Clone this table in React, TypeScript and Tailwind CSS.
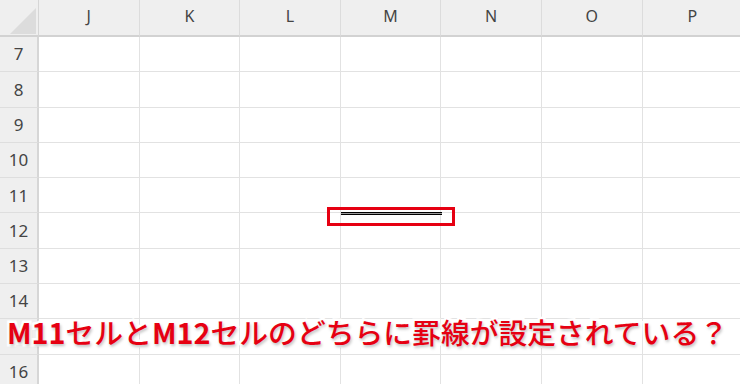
import React from "react"

const cols = ["J", "K", "L", "M", "N", "O", "P"]
const rows = [7, 8, 9, 10, 11, 12, 13, 14, 15, 16]

export default function App() {
  return (
    <div className="relative w-[740px] h-[384px] overflow-hidden bg-white font-['Noto_Sans','Liberation_Sans',sans-serif]">
      {/* sheet grid */}
      <div className="grid grid-cols-[39px_repeat(7,100.6px)] grid-rows-[37px_repeat(10,35.3px)]">
        {/* corner */}
        <div className="relative bg-[#efefef] border-r border-r-[#d6d6d6] border-b-2 border-b-[#d2d2d2]">
          <svg width="39" height="37" className="absolute inset-0">
            <polygon points="10,34 36,34 36,8" fill="#dcdcdc" />
          </svg>
        </div>
        {cols.map((c) => (
          <div
            key={c}
            className="flex items-center justify-center pb-1 bg-[#efefef] border-r border-r-[#dcdcdc] border-b-2 border-b-[#d2d2d2] text-[16px] text-[#444]"
          >
            {c}
          </div>
        ))}

        {rows.map((r) => (
          <React.Fragment key={r}>
            <div className="flex items-center justify-center bg-[#efefef] border-r-2 border-r-[#d6d6d6] border-b border-b-[#dedede] text-[17px] text-[#444]">
              {r}
            </div>
            {cols.map((c) => (
              <div key={c + r} className="border-r border-b border-[#e2e2e2]" />
            ))}
          </React.Fragment>
        ))}
      </div>

      {/* double border under M11 */}
      <div className="absolute left-[341px] top-[212px] w-[101px] h-[3px] border-y border-[#000] bg-[#9a9a9a]" />

      {/* red highlight box */}
      <div className="absolute left-[327px] top-[207px] w-[128px] h-[19px] border-[3px] border-[#e60012]" />

      {/* caption */}
      <div className="absolute left-[7px] top-[318px] whitespace-nowrap text-[28.8px] leading-none font-medium text-[#e60012] font-['Noto_Sans_CJK_JP','Noto_Sans',sans-serif] [paint-order:stroke_fill] [-webkit-text-stroke:5px_white] [text-shadow:1px_2px_3px_rgba(0,0,0,0.25)]">
        <span className="font-bold">M11</span>セルと<span className="font-bold">M12</span>セルのどちらに罫線が設定されている？
      </div>
    </div>
  )
}
